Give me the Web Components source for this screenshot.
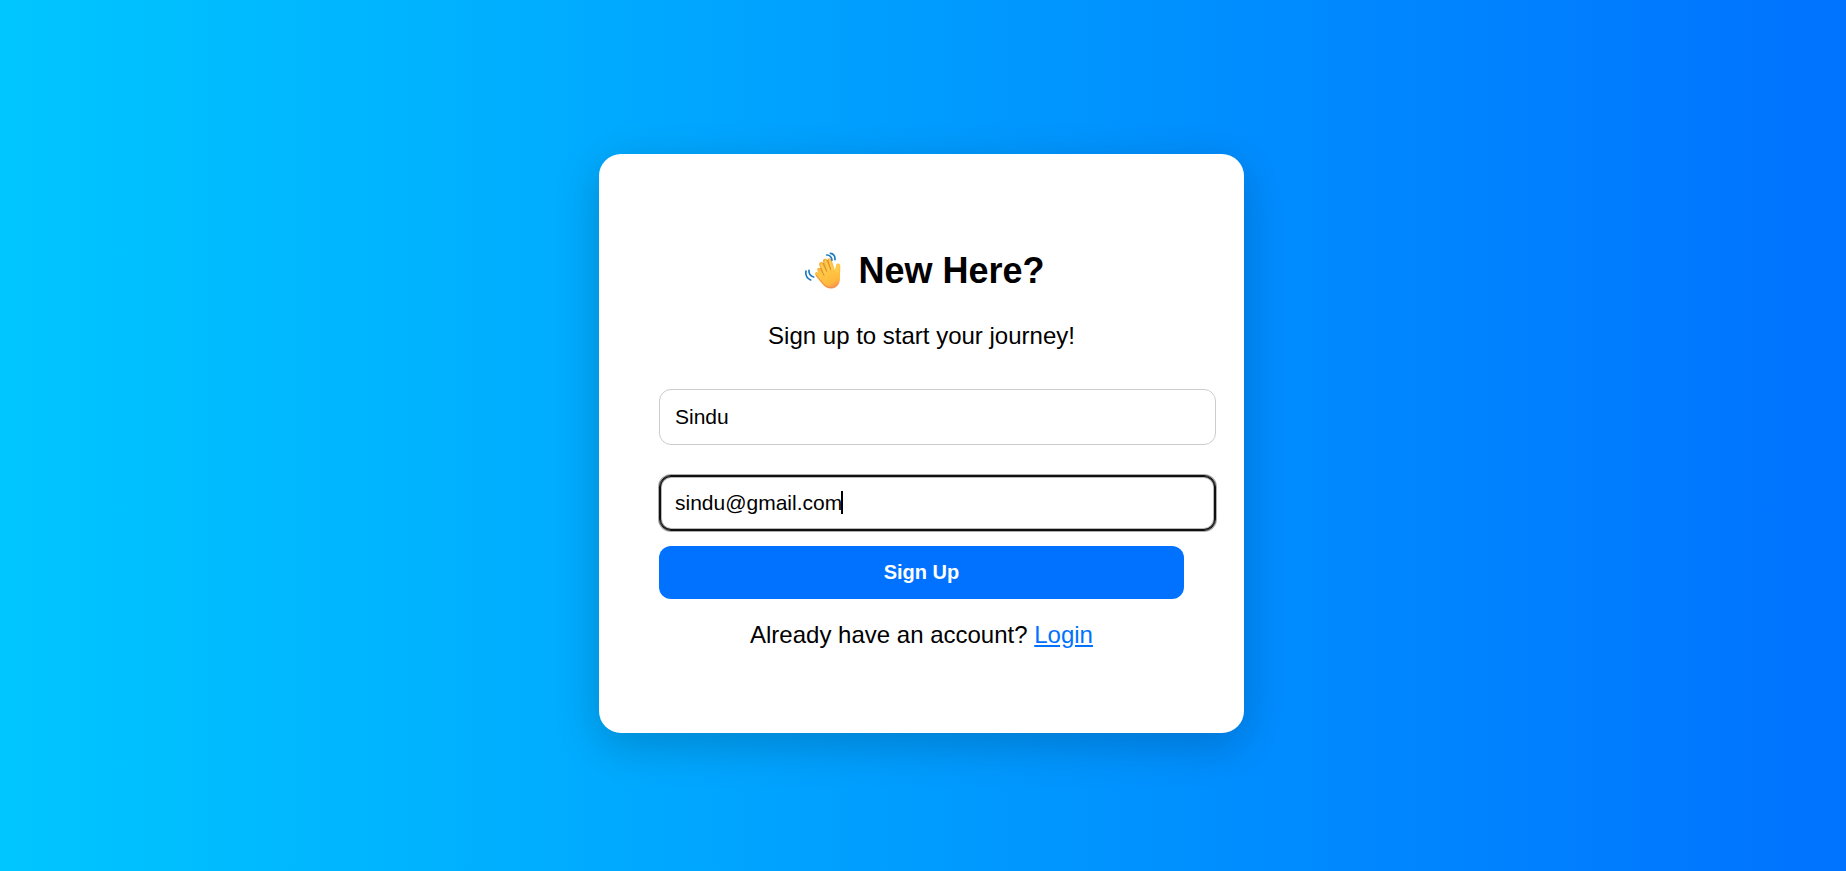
<!DOCTYPE html>
<html lang="en">
<head>
<meta charset="utf-8">
<meta name="viewport" content="width=device-width, initial-scale=1">
<title>Sign Up</title>
<style>
  body { margin: 0; font-family: "Liberation Sans", Arial, sans-serif; font-size: 24px; line-height: 27px; color: #000; }
</style>
</head>
<body>
<signup-page>
  <signup-card>
    <wave-icon slot="icon"></wave-icon>
    <span slot="title">New Here?</span>
    <span slot="subtitle">Sign up to start your journey!</span>
    <text-field label="Name" type="text" value="Sindu"></text-field>
    <text-field label="Email" type="email" value="sindu@gmail.com" active></text-field>
    <submit-button>Sign Up</submit-button>
    <login-prompt slot="footer">Already have an account?</login-prompt>
  </signup-card>
</signup-page>
<script>
const define = (name, html, setup) => customElements.define(name, class extends HTMLElement {
  constructor() {
    super();
    this.attachShadow({ mode: "open" }).innerHTML = html;
  }
  connectedCallback() { if (setup) setup(this, this.shadowRoot); }
});

define("signup-page", `
  <style>
    :host { display: flex; align-items: center; justify-content: center; box-sizing: border-box;
      min-height: 100vh; padding: 16px 3px 0 0; background: linear-gradient(to right, #00c6ff, #0072ff); }
  </style>
  <slot></slot>`);

define("signup-card", `
  <style>
    :host { display: block; box-sizing: border-box; width: 645px; padding: 60px; background: #fff;
      border-radius: 22px; box-shadow: 0 12px 45px rgba(0,0,0,.2); text-align: center; }
    h2 { display: flex; justify-content: center; align-items: flex-end; gap: 11px; margin: 30px 0; font-size: 36px; line-height: 42px; }
    p { margin: 24px 0; }
    form { margin: 0; padding-top: 16px; }
    .footer { margin: 22px 0 25px; }
  </style>
  <h2><slot name="icon"></slot><slot name="title"></slot></h2>
  <p><slot name="subtitle"></slot></p>
  <form><slot></slot></form>
  <p class="footer"><slot name="footer"></slot></p>`);

define("wave-icon", `
  <style>:host { display: block; width: 49px; height: 48px; } svg { display: block; }</style>
  <svg width="49" height="48" viewBox="8 4 147 144" fill="none" stroke-linecap="round" stroke-linejoin="round" aria-hidden="true">
    <defs>
      <linearGradient id="skin" gradientUnits="userSpaceOnUse" x1="72" y1="62" x2="115" y2="136">
        <stop offset="0" stop-color="#f5ae3c"/><stop offset=".4" stop-color="#ffc643"/><stop offset=".8" stop-color="#ffb83c"/><stop offset="1" stop-color="#f59252"/>
      </linearGradient>
    </defs>
    <path d="M61 89C57 93 60 100 65 105L84 128C92 138 109 141 122 133C135 125 134 110 134 98L135 70C135 60 124 60 122 68L119 83L109 53C106 44 96 46 97 53C91 45 81 48 83 57L84 62C79 54 68 60 72 69L76 77C70 73 63 77 66 84L69 91C66 87 63 87 61 89Z" fill="url(#skin)"/>
    <path d="M84 62L94 86M97 53L106 81M76 77L86 98" stroke="#d98a2b" stroke-width="3"/>
    <path d="M78 65L90 90M90 55L101 82M103 53L112 82M128 69L125 88" stroke="#ffce50" stroke-width="5"/>
    <path d="M63 98L86 126C93 134 104 136 111 134" stroke="#ef8958" stroke-width="3"/>
    <path d="M105 32C114 32 120 41 119 51M94 37C103 36 110 45 110 53M32 85C30 96 35 107 46 112M41 83C40 93 46 100 55 103" stroke="#1b7ac2" stroke-width="5"/>
  </svg>`);

define("text-field", `
  <style>
    :host { display: block; position: relative; margin-bottom: 30px; text-align: left; }
    :host([active]) { margin-bottom: 15px; }
    input { display: block; box-sizing: content-box; width: 100%; height: 24px; margin: 0; padding: 15px;
      border: 1px solid #ccc; border-radius: 12px; outline: none; background: #fff; color: #000;
      font: 21px/24px "Liberation Sans", Arial, sans-serif; caret-color: transparent; }
    :host([active]) input { border-color: #101010; box-shadow: inset 0 0 0 1px #101010, inset 0 0 0 2px rgba(16,16,16,.3), 0 0 0 1px rgba(16,16,16,.35); }
    .caret { display: none; position: absolute; left: 182px; top: 16px; width: 2px; height: 23px; background: #000; }
    :host([active]) .caret { display: block; }
  </style>
  <input><span class="caret"></span>`,
  (host, root) => {
    const input = root.querySelector("input");
    input.type = host.getAttribute("type");
    input.value = host.getAttribute("value");
    input.setAttribute("aria-label", host.getAttribute("label"));
  });

define("submit-button", `
  <style>
    :host { display: block; }
    button { display: block; width: 100%; margin: 0; padding: 15px; border: 0; border-radius: 12px; background: #0072ff; color: #fff;
      font: bold 20px/23px "Liberation Sans", Arial, sans-serif; cursor: pointer; }
  </style>
  <button type="button"><slot></slot></button>`);

define("login-prompt", `
  <style>a { color: #0072ff; text-decoration: underline; }</style>
  <slot></slot> <a href="#login">Login</a>`);
</script>
</body>
</html>
